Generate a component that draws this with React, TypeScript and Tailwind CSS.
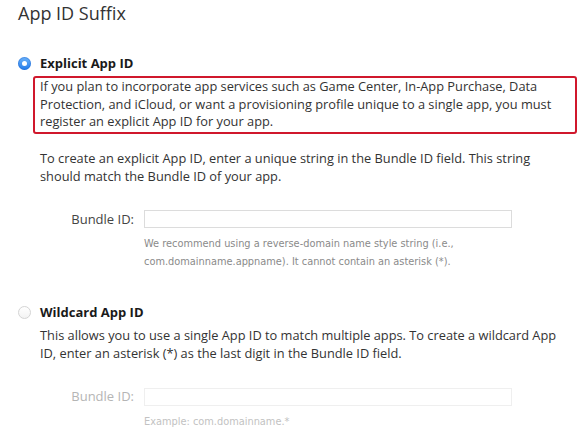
const Radio = ({ checked }: { checked?: boolean }) =>
  checked ? (
    <span className="mt-[3px] flex h-[13px] w-[13px] items-center justify-center rounded-full bg-gradient-to-b from-[#6cb3fa] to-[#1f7ae8] shadow-[inset_0_0_0_1px_rgba(20,90,200,0.35)]">
      <span className="h-[5px] w-[5px] rounded-full bg-white" />
    </span>
  ) : (
    <span className="mt-[3px] block h-[13px] w-[13px] rounded-full border border-[#d4d4d4] bg-gradient-to-b from-white to-[#f3f3f3]" />
  );

const BundleField = ({
  disabled,
  hint,
}: {
  disabled?: boolean;
  hint: React.ReactNode;
}) => (
  <div className="mt-[25px]">
    <div className="flex items-center">
      <label
        className={
          "w-[104px] pr-[10px] text-right text-[13px] " +
          (disabled ? "text-[#b5b5b5]" : "text-[#444]")
        }
      >
        Bundle ID:
      </label>
      <input
        type="text"
        disabled={disabled}
        className={
          "h-[18px] w-[368px] border bg-white outline-none " +
          (disabled ? "border-[#efefef]" : "border-[#dcdcdc]")
        }
      />
    </div>
    <p
      className={
        "mt-[6px] ml-[104px] font-['DejaVu_Sans',sans-serif] text-[9.8px] leading-[18px] " +
        (disabled ? "text-[#c2c2c2]" : "text-[#8a8a8a]")
      }
    >
      {hint}
    </p>
  </div>
);

export default function App() {
  return (
    <div className="h-[440px] w-[583px] overflow-hidden bg-white pl-[18px] font-['Open_Sans',sans-serif] text-[#333]">
      <h2 className="text-[18px] leading-[26px] text-[#333]">App ID Suffix</h2>

      <div className="mt-[28px] flex gap-[9px]">
        <Radio checked />
        <div className="flex-1">
          <h3 className="text-[13px] font-bold leading-[18px] text-[#1a1a1a]">
            Explicit App ID
          </h3>
          <p className="mt-[4px] -ml-[7px] mr-[6px] whitespace-nowrap rounded-[3px] border-2 border-[#d0182c] pl-[5px] pb-[1px] text-[12.8px] leading-[17.5px]">
            If you plan to incorporate app services such as Game Center, In-App Purchase, Data
            <br />
            Protection, and iCloud, or want a provisioning profile unique to a single app, you must
            <br />
            register an explicit App ID for your app.
          </p>
          <p className="mt-[15px] whitespace-nowrap text-[12.8px] leading-[18px]">
            To create an explicit App ID, enter a unique string in the Bundle ID field. This string
            <br />
            should match the Bundle ID of your app.
          </p>
          <BundleField
            hint={
              <>
                We recommend using a reverse-domain name style string (i.e.,
                <br />
                com.domainname.appname). It cannot contain an asterisk (*).
              </>
            }
          />
        </div>
      </div>

      <div className="mt-[32px] flex gap-[9px]">
        <Radio />
        <div className="flex-1">
          <h3 className="text-[13px] font-bold leading-[18px] text-[#1a1a1a]">
            Wildcard App ID
          </h3>
          <p className="mt-[5px] whitespace-nowrap text-[12.8px] leading-[18px]">
            This allows you to use a single App ID to match multiple apps. To create a wildcard App
            <br />
            ID, enter an asterisk (*) as the last digit in the Bundle ID field.
          </p>
          <BundleField disabled hint="Example: com.domainname.*" />
        </div>
      </div>
    </div>
  );
}
